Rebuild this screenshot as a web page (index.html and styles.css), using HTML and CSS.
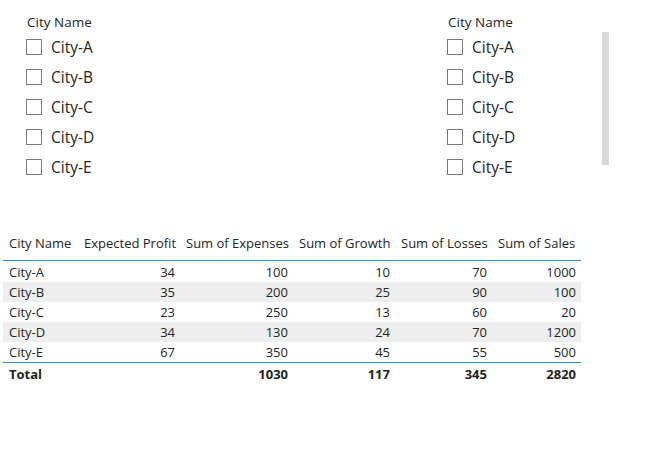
FILE: index.html
```html
<!DOCTYPE html>
<html>
<head>
<meta charset="utf-8">
<link rel="stylesheet" href="styles.css">
</head>
<body>
<div class="page">
  <div class="slicers">
    <div class="slicer slicer-left">
      <div class="slicer-title">City Name</div>
      <ul class="items">
        <li class="item"><span class="box"></span><span class="label">City-A</span></li>
        <li class="item"><span class="box"></span><span class="label">City-B</span></li>
        <li class="item"><span class="box"></span><span class="label">City-C</span></li>
        <li class="item"><span class="box"></span><span class="label">City-D</span></li>
        <li class="item"><span class="box"></span><span class="label">City-E</span></li>
      </ul>
    </div>
    <div class="slicer slicer-right">
      <div class="slicer-body">
        <div class="slicer-title">City Name</div>
        <ul class="items">
          <li class="item"><span class="box"></span><span class="label">City-A</span></li>
          <li class="item"><span class="box"></span><span class="label">City-B</span></li>
          <li class="item"><span class="box"></span><span class="label">City-C</span></li>
          <li class="item"><span class="box"></span><span class="label">City-D</span></li>
          <li class="item"><span class="box"></span><span class="label">City-E</span></li>
        </ul>
      </div>
      <div class="scrollbar"></div>
    </div>
  </div>

  <table class="grid">
    <colgroup>
      <col class="c1"><col class="c2"><col class="c3"><col class="c4"><col class="c5"><col class="c6">
    </colgroup>
    <thead>
      <tr>
        <th>City Name</th><th>Expected Profit</th><th>Sum of Expenses</th><th>Sum of Growth</th><th>Sum of Losses</th><th>Sum of Sales</th>
      </tr>
    </thead>
    <tbody>
      <tr><td>City-A</td><td class="num">34</td><td class="num">100</td><td class="num">10</td><td class="num">70</td><td class="num">1000</td></tr>
      <tr class="alt"><td>City-B</td><td class="num">35</td><td class="num">200</td><td class="num">25</td><td class="num">90</td><td class="num">100</td></tr>
      <tr><td>City-C</td><td class="num">23</td><td class="num">250</td><td class="num">13</td><td class="num">60</td><td class="num">20</td></tr>
      <tr class="alt"><td>City-D</td><td class="num">34</td><td class="num">130</td><td class="num">24</td><td class="num">70</td><td class="num">1200</td></tr>
      <tr><td>City-E</td><td class="num">67</td><td class="num">350</td><td class="num">45</td><td class="num">55</td><td class="num">500</td></tr>
    </tbody>
    <tfoot>
      <tr><td>Total</td><td class="num"></td><td class="num">1030</td><td class="num">117</td><td class="num">345</td><td class="num">2820</td></tr>
    </tfoot>
  </table>
</div>
</body>
</html>
```
FILE: styles.css
```css
html, body {
  margin: 0;
  padding: 0;
  background: #ffffff;
}
body {
  font-family: "Open Sans", "Noto Sans", "Liberation Sans", sans-serif;
  color: #252423;
}
.page {
  width: 647px;
  height: 450px;
  overflow: hidden;
}
.slicers {
  display: flex;
  padding-top: 12px;
}
.slicer-left {
  width: 421px;
  padding-left: 26px;
  box-sizing: border-box;
}
.slicer-right {
  display: flex;
  flex: 1;
  padding-left: 26px;
  box-sizing: border-box;
}
.slicer-body {
  width: 155px;
}
.slicer-title {
  font-size: 13.5px;
  line-height: 20px;
  height: 20px;
  padding-left: 1px;
}
.items {
  list-style: none;
  margin: 0;
  padding: 0;
}
.item {
  display: flex;
  align-items: center;
  height: 30px;
}
.box {
  width: 16px;
  height: 16px;
  box-sizing: border-box;
  border: 1px solid #7a7a7a;
  background: #fff;
  flex: none;
}
.label {
  margin-left: 9px;
  font-size: 15.5px;
  line-height: 20px;
}
.scrollbar {
  width: 7px;
  height: 133px;
  margin-top: 20px;
  background: #d9d9d9;
}
.grid {
  margin-top: 50px;
  margin-left: 3px;
  border-collapse: separate;
  border-spacing: 0;
  table-layout: fixed;
  width: 578px;
  font-size: 13px;
}
.c1 { width: 75px; }
.c2 { width: 102px; }
.c3 { width: 113px; }
.c4 { width: 102px; }
.c5 { width: 97px; }
.c6 { width: 89px; }
.grid th {
  font-weight: normal;
  text-align: left;
  white-space: nowrap;
  vertical-align: top;
  padding: 1px 0 7px 6px;
  line-height: 20px;
  border-bottom: 1px solid #2d8de3;
  overflow: visible;
}
.grid td {
  line-height: 20px;
  padding: 0 5px 0 6px;
  white-space: nowrap;
}
.grid tbody tr:first-child td {
  padding-top: 1px;
}
.grid td.num {
  text-align: right;
}
.grid tbody tr.alt td {
  background: #eeeeee;
}
.grid tfoot td {
  border-top: 1px solid #2d8de3;
  font-weight: bold;
  line-height: 22px;
}
```
